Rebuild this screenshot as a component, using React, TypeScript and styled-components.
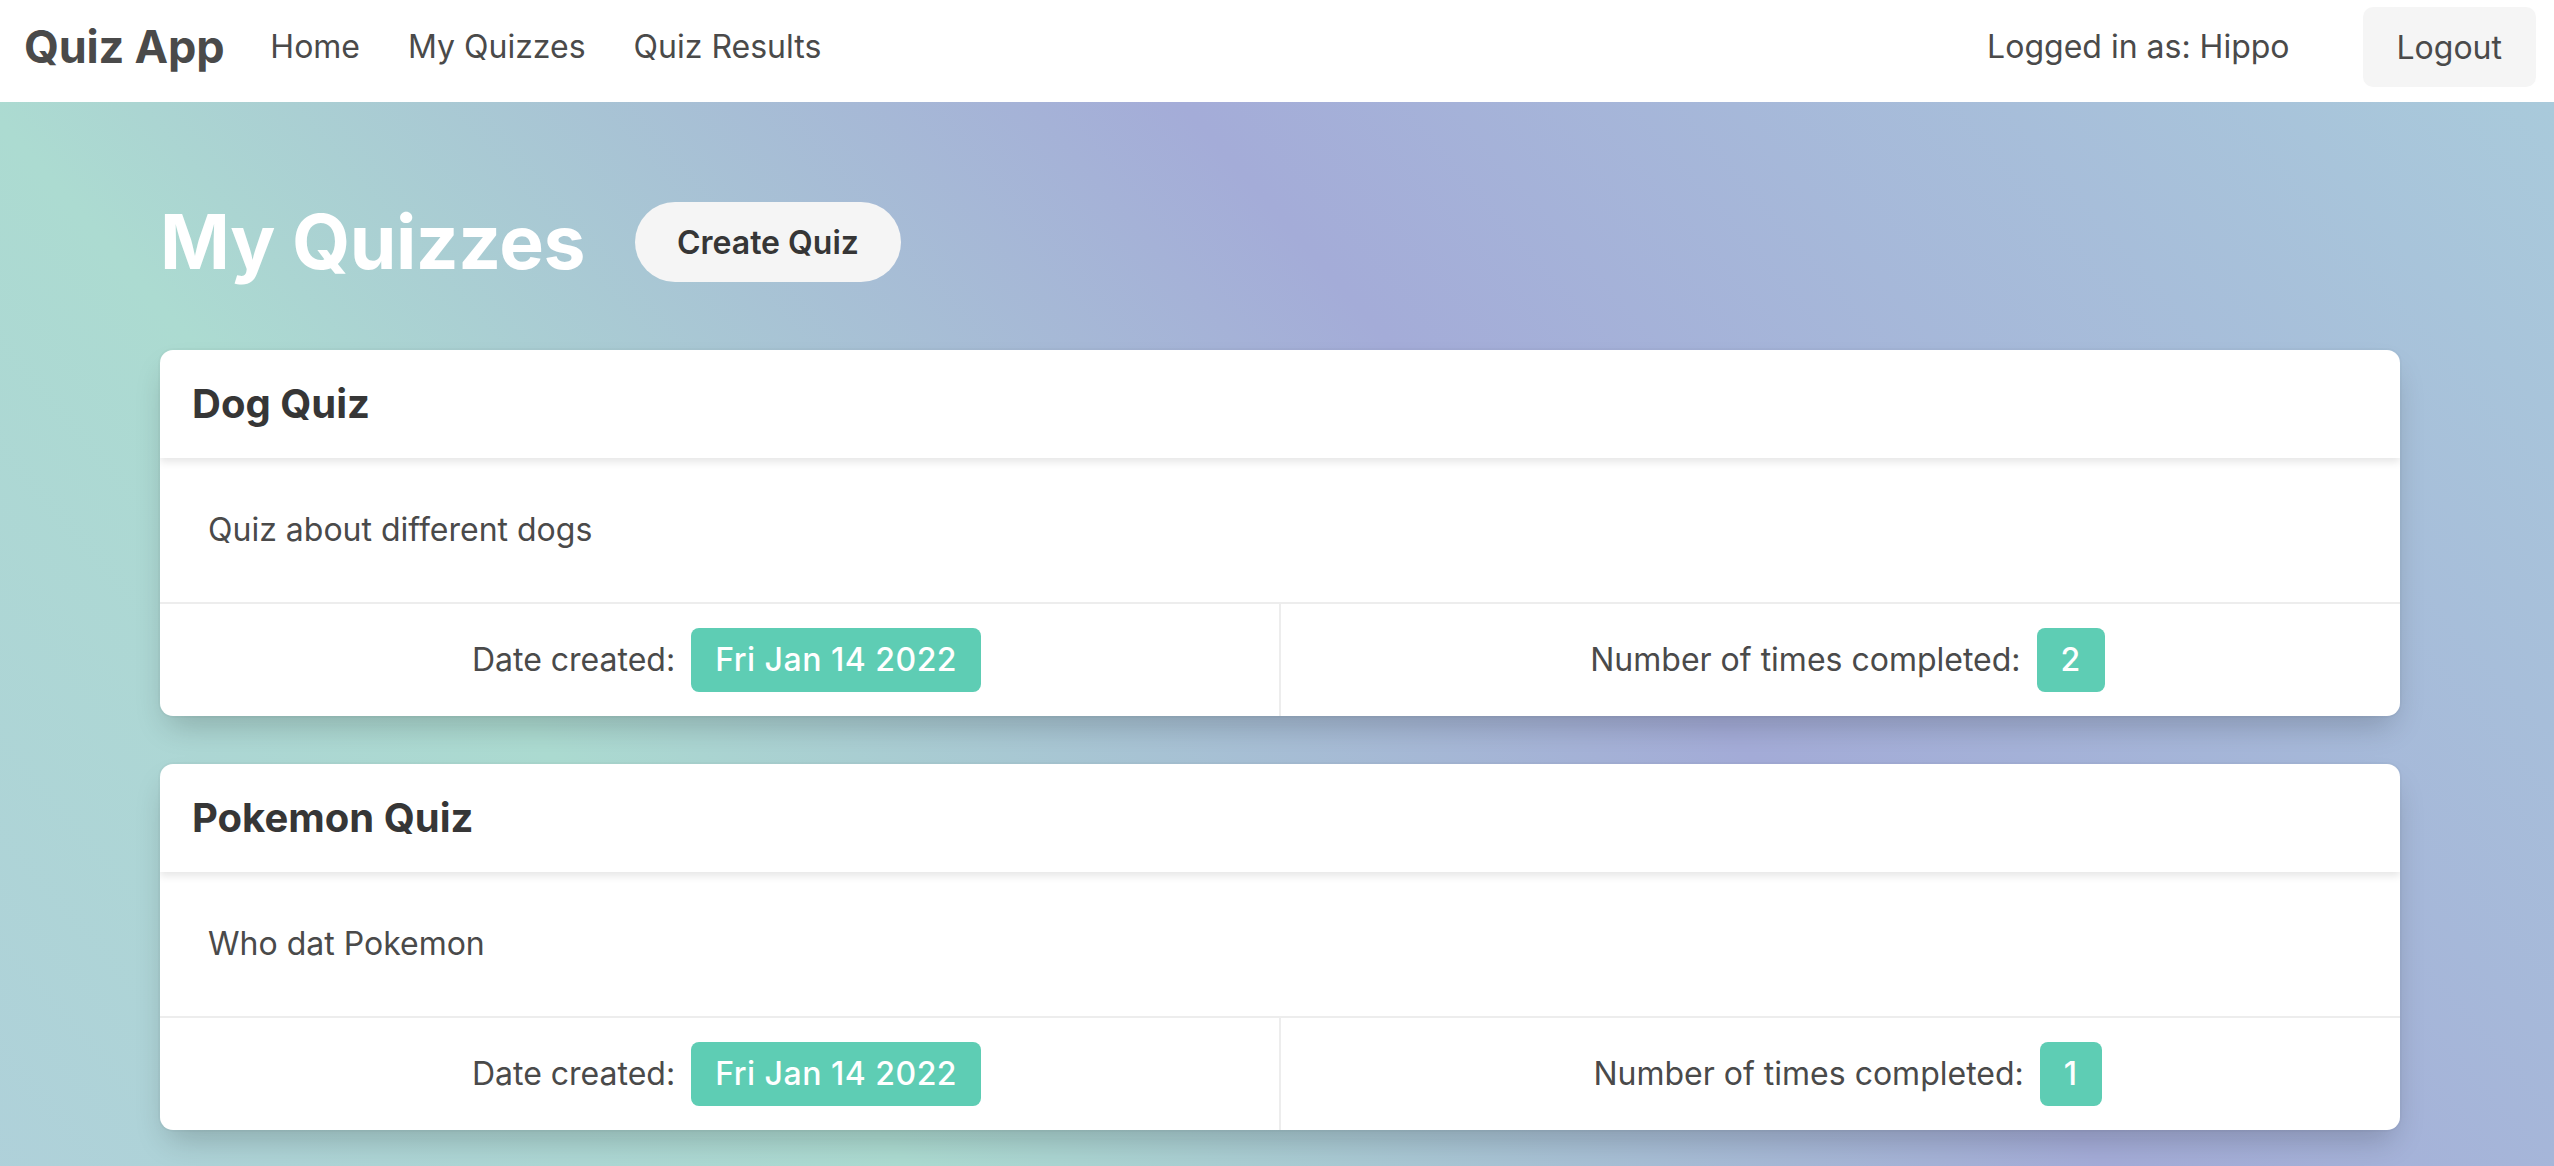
import React from 'react';
import styled, { createGlobalStyle } from 'styled-components';

const GlobalStyle = createGlobalStyle`
  html, body {
    margin: 0;
    padding: 0;
  }
  body {
    font-family: Inter, 'Noto Sans', 'Liberation Sans', sans-serif;
    font-size: 32px;
    line-height: 1.5;
    color: #4a4a4a;
    background: #ffffff;
  }
  #root {
    min-height: 100vh;
    display: flex;
    flex-direction: column;
  }
`;

const Navbar = styled.nav`
  height: 102px;
  box-sizing: border-box;
  padding: 0 18px 8px 0;
  display: flex;
  align-items: center;
  background: #ffffff;
`;

const Brand = styled.a`
  padding: 0 22px 0 24px;
  font-size: 45px;
  font-weight: 700;
  color: #4a4a4a;
  letter-spacing: -0.2px;
`;

const NavItem = styled.a`
  padding: 0 24px;
  color: #4a4a4a;
  cursor: pointer;
`;

const NavEnd = styled.div`
  margin-left: auto;
  display: flex;
  align-items: center;
  gap: 73px;
`;

const LightButton = styled.button<{ $rounded?: boolean; $weight?: number }>`
  height: 80px;
  padding: 0 ${p => (p.$rounded ? '42px' : '34px')};
  border: none;
  border-radius: ${p => (p.$rounded ? '9999px' : '10px')};
  background: #f5f5f5;
  color: ${p => (p.$rounded ? '#363636' : '#4a4a4a')};
  font-family: inherit;
  font-size: 32px;
  font-weight: ${p => p.$weight ?? 400};
  cursor: pointer;
`;

const Main = styled.main`
  flex: 1;
  padding: 96px 154px 36px 160px;
  background: linear-gradient(
    49deg,
    #afd0da 0%,
    #acdbd1 27%,
    #a4acd8 61%,
    #a9cadb 100%
  );
`;

const HeaderRow = styled.div`
  display: flex;
  align-items: center;
  gap: 50px;
  margin-bottom: 64px;
`;

const Title = styled.h1`
  margin: 0;
  font-size: 75px;
  line-height: 88px;
  font-weight: 700;
  color: #ffffff;
  letter-spacing: -0.5px;
`;

const Card = styled.div`
  background: #ffffff;
  border-radius: 13px;
  box-shadow: 0 16px 32px -8px rgba(10, 10, 10, 0.22), 0 0 0 2px rgba(10, 10, 10, 0.02);
  margin-bottom: 48px;
  overflow: hidden;
`;

const CardHeader = styled.header`
  padding: 24px 32px;
  box-shadow: 0 4px 8px rgba(10, 10, 10, 0.1);
  position: relative;
`;

const CardTitle = styled.p`
  margin: 0;
  font-size: 40px;
  line-height: 60px;
  font-weight: 700;
  color: #363636;
`;

const CardContent = styled.div`
  padding: 48px;
`;

const CardFooter = styled.footer`
  display: flex;
  border-top: 2px solid #ededed;
`;

const FooterItem = styled.div`
  flex: 1;
  display: flex;
  align-items: center;
  justify-content: center;
  padding: 24px 24px 24px 38px;
  & + & {
    border-left: 2px solid #ededed;
  }
`;

const Tag = styled.span`
  margin-left: 16px;
  height: 64px;
  padding: 0 24px;
  display: inline-flex;
  align-items: center;
  border-radius: 8px;
  background: #5ecdb4;
  color: #ffffff;
  font-weight: 500;
  letter-spacing: 0.5px;
`;

type Quiz = { name: string; description: string; created: string; completed: number };

const quizzes: Quiz[] = [
  { name: 'Dog Quiz', description: 'Quiz about different dogs', created: 'Fri Jan 14 2022', completed: 2 },
  { name: 'Pokemon Quiz', description: 'Who dat Pokemon', created: 'Fri Jan 14 2022', completed: 1 },
];

const QuizCard = ({ quiz }: { quiz: Quiz }) => (
  <Card>
    <CardHeader>
      <CardTitle>{quiz.name}</CardTitle>
    </CardHeader>
    <CardContent>{quiz.description}</CardContent>
    <CardFooter>
      <FooterItem>
        Date created: <Tag>{quiz.created}</Tag>
      </FooterItem>
      <FooterItem>
        Number of times completed: <Tag>{quiz.completed}</Tag>
      </FooterItem>
    </CardFooter>
  </Card>
);

export default function App() {
  return (
    <>
      <GlobalStyle />
      <Navbar>
        <Brand>Quiz App</Brand>
        <NavItem>Home</NavItem>
        <NavItem>My Quizzes</NavItem>
        <NavItem>Quiz Results</NavItem>
        <NavEnd>
          <span>Logged in as: Hippo</span>
          <LightButton>Logout</LightButton>
        </NavEnd>
      </Navbar>
      <Main>
        <HeaderRow>
          <Title>My Quizzes</Title>
          <LightButton $rounded $weight={600}>Create Quiz</LightButton>
        </HeaderRow>
        {quizzes.map(q => (
          <QuizCard key={q.name} quiz={q} />
        ))}
      </Main>
    </>
  );
}
